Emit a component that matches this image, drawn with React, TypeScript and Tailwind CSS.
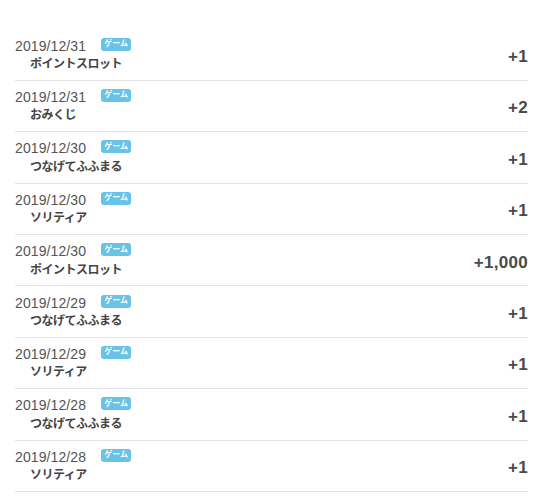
const rows = [
  { date: "2019/12/31", title: "ポイントスロット", amount: "+1" },
  { date: "2019/12/31", title: "おみくじ", amount: "+2" },
  { date: "2019/12/30", title: "つなげてふふまる", amount: "+1" },
  { date: "2019/12/30", title: "ソリティア", amount: "+1" },
  { date: "2019/12/30", title: "ポイントスロット", amount: "+1,000" },
  { date: "2019/12/29", title: "つなげてふふまる", amount: "+1" },
  { date: "2019/12/29", title: "ソリティア", amount: "+1" },
  { date: "2019/12/28", title: "つなげてふふまる", amount: "+1" },
  { date: "2019/12/28", title: "ソリティア", amount: "+1" },
];

export default function App() {
  return (
    <div className="min-h-[499px] bg-white pt-[29.4px] pl-[15px] pr-[22px] font-['Liberation_Sans','Noto_Sans_CJK_JP',sans-serif]">
      <ul>
        {rows.map((r, i) => (
          <li
            key={i}
            className="flex h-[51.4px] items-center justify-between border-b border-[#e5e5e5]"
          >
            <div>
              <div className="flex h-[16px] items-center">
                <span className="mt-[1px] text-[14px] leading-none tracking-[0.1px] text-[#555]">{r.date}</span>
                <span className="mb-[2px] ml-[15px] flex h-[13px] w-[30px] items-center justify-center rounded-[3px] bg-[#68c3e6] text-[8px] font-bold leading-none text-white">
                  ゲーム
                </span>
              </div>
              <div className="mt-[3px] flex h-[16px] items-center pl-[15px] text-[12px] font-bold leading-none tracking-[-0.5px] text-[#444]">
                {r.title}
              </div>
            </div>
            <div className="pt-[4px] text-[17px] font-bold leading-none tracking-[0.3px] text-[#4a4a4a]">{r.amount}</div>
          </li>
        ))}
      </ul>
    </div>
  );
}
